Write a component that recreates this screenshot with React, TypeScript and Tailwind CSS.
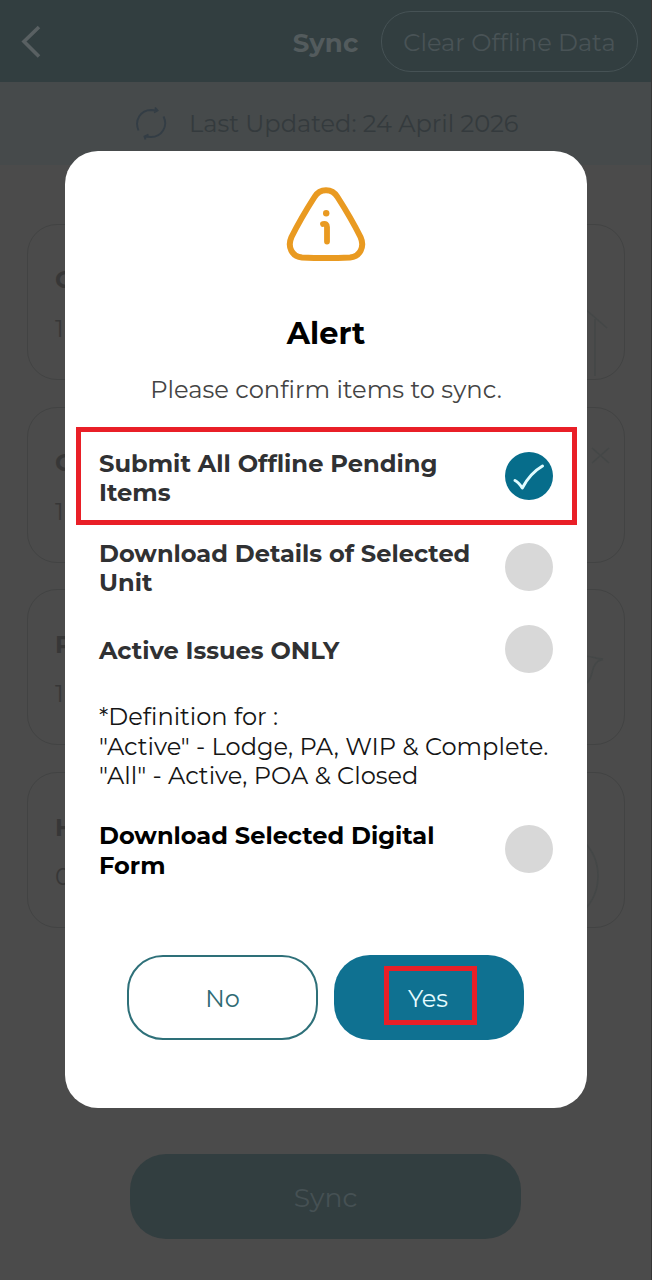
import { clsx } from "clsx";

const cards = [
  { title: "C", count: "1" },
  { title: "C", count: "1" },
  { title: "P", count: "1" },
  { title: "H", count: "0" },
];

function CardIcon({ index }: { index: number }) {
  return (
    <svg width="60" height="156" viewBox="0 0 60 156" fill="none" stroke="#444747" strokeWidth="1.6">
      {index === 0 && <path d="m20 83 23 20M31 94v57" />}
      {index === 1 && <path d="m28 40 17 15M45 40 28 55" />}
      {index === 2 && <path d="M20 66q12 1 17 4c-5 1-8 7-9 13-1 4-2 7-5 10M31 68l8 1" />}
      {index === 3 && <circle cx="-15" cy="103" r="49" />}
    </svg>
  );
}

function Toggle({ checked = false }: { checked?: boolean }) {
  return (
    <div
      className={clsx(
        "size-12 shrink-0 rounded-full",
        checked ? "bg-[#066d8b]" : "bg-[#d8d8d8]"
      )}
    >
      {checked && (
        <svg viewBox="0 0 48 48" fill="none" stroke="#dffcff" strokeWidth="3" strokeLinecap="round" strokeLinejoin="round">
          <path d="M10 28.5c3 1.500 5 4 7.300 7.500C22 27 28 19.500 37.500 14" />
        </svg>
      )}
    </div>
  );
}

export default function App() {
  return (
    <div className="relative h-[1280px] w-[652px] overflow-hidden border-r border-[#363636] bg-[#4b4b4b] font-['Montserrat','Inter',sans-serif] text-2xl">
      <header className="grid h-[82px] grid-cols-[1fr_auto_1fr] items-center bg-[#323e40]">
        <svg className="ml-5" width="24" height="40" viewBox="0 0 24 40" fill="none" stroke="#596062" strokeWidth="3.6">
          <path d="M19 6 4 20.500 19 35.500" />
        </svg>
        <h1 className="pt-1 text-[26px] font-bold text-[#535b5d]">Sync</h1>
        <div className="mr-[13px] flex h-[61px] w-[257px] items-center justify-center justify-self-end rounded-[30px] border border-[#465255] pt-1">
          <span className="text-[24.1px] whitespace-nowrap text-[#495356]">Clear Offline Data</span>
        </div>
      </header>

      <div className="flex h-[83px] items-center bg-[#464a4b] pl-[135px] text-[#343a3d]">
        <svg width="32" height="36" viewBox="0 0 32 36" fill="none" stroke="#333d45" strokeWidth="1.9">
          <path d="M3.500 24.500C-1 14 6 4 16 4l6 .5M20 1.500l2.500 3-3.500 2M28.500 10.500c5 10-2 20.500-12.500 20.500l-6-.5M10.500 33.500l-1-3 4-2" />
        </svg>
        <span className="ml-[22px] pt-0.5 text-[24.1px] whitespace-nowrap">Last Updated: 24 April 2026</span>
      </div>

      <main className="flex flex-col gap-[26.7px] px-[27px] pt-[59px]">
        {cards.map((card, index) => (
          <section key={index} className="flex h-[156px] w-[598px] justify-between rounded-[30px] border border-[#424343] pl-[27px] text-[#373737]">
            <div className="pt-[39px]">
              <h2 className="font-bold">{card.title}</h2>
              <p className="mt-[17px]">{card.count}</p>
            </div>
            <CardIcon index={index} />
          </section>
        ))}
      </main>

      <button className="mt-[226px] ml-[130px] block h-[85px] w-[391px] rounded-[36px] bg-[#323e40] pt-0.5 text-[26.6px] text-[#465154]">
        Sync
      </button>

      {/* confirmation dialog */}
      <div className="absolute top-[151px] left-[65px] h-[957px] w-[522px] rounded-[33px] bg-white text-[#303133]">
        <svg className="mx-auto mt-[34px]" width="82" height="78" viewBox="0 0 82 78" fill="none" stroke="#e99a21" strokeLinecap="round" strokeLinejoin="round">
          <path strokeWidth="6" d="M29.500 12C35 3 47 3 52.500 12Q66 33 75.500 52C80 62 75 71.500 65 72.500Q41 73.500 17 72.500C7 71.500 2 62 6.500 52Q16 33 29.500 12Z" />
          <path strokeWidth="5.800" d="M38 39q4-1 4 3v14.500" />
          <circle cx="41.200" cy="28.300" r="3.200" fill="#e99a21" stroke="none" />
        </svg>

        <h2 className="mt-[51px] text-center text-[30.4px] leading-10 font-bold text-black">Alert</h2>
        <p className="mt-[21px] text-center text-[24.2px] leading-[30px] text-[#444]">Please confirm items to sync.</p>

        <div className="mx-[11px] mt-[22px] flex h-[98px] w-[501px] items-center justify-between border-5 border-[#e91f27] pr-[19px] pl-[18px]">
          <p className="pt-1 text-[24.2px] leading-[29.5px] font-bold whitespace-nowrap">
            Submit All Offline Pending<br />Items
          </p>
          <Toggle checked />
        </div>
        <div className="mt-[12px] flex h-[60px] items-center justify-between px-[34px]">
          <p className="pt-0.5 text-[24.1px] leading-[29.5px] font-bold whitespace-nowrap">
            Download Details of Selected<br />Unit
          </p>
          <Toggle />
        </div>
        <div className="mt-[28px] flex h-[48px] items-center justify-between px-[34px]">
          <p className="pt-1 text-[24.1px] font-bold whitespace-nowrap">Active Issues ONLY</p>
          <Toggle />
        </div>
        <div className="mt-[29px] pl-[34px] text-[24.1px] leading-[29.5px] whitespace-nowrap text-[#151515]">
          <p>*Definition for :</p>
          <p>"Active" - Lodge, PA, WIP &amp; Complete.</p>
          <p>"All" - Active, POA &amp; Closed</p>
        </div>
        <div className="mt-[28px] flex h-[60px] items-center justify-between px-[34px] text-black">
          <p className="pt-1 text-[24.1px] leading-[29.5px] font-bold whitespace-nowrap">
            Download Selected Digital<br />Form
          </p>
          <Toggle />
        </div>

        <div className="mt-[76px] flex gap-4 pl-[62px]">
          <button className="h-[85px] w-[191px] rounded-[36px] border-2 border-[#2e7079] pt-1 text-[#2f6b74]">
            No
          </button>
          <button className="flex h-[85px] w-[190px] items-center justify-center rounded-[36px] bg-[#0f7191] text-[#e5fbff]">
            <span className="mb-[3px] ml-0.5 flex h-[59px] w-[93px] items-center justify-center border-5 border-[#e91f27] pt-1.5 pr-1">Yes</span>
          </button>
        </div>
      </div>
    </div>
  );
}
